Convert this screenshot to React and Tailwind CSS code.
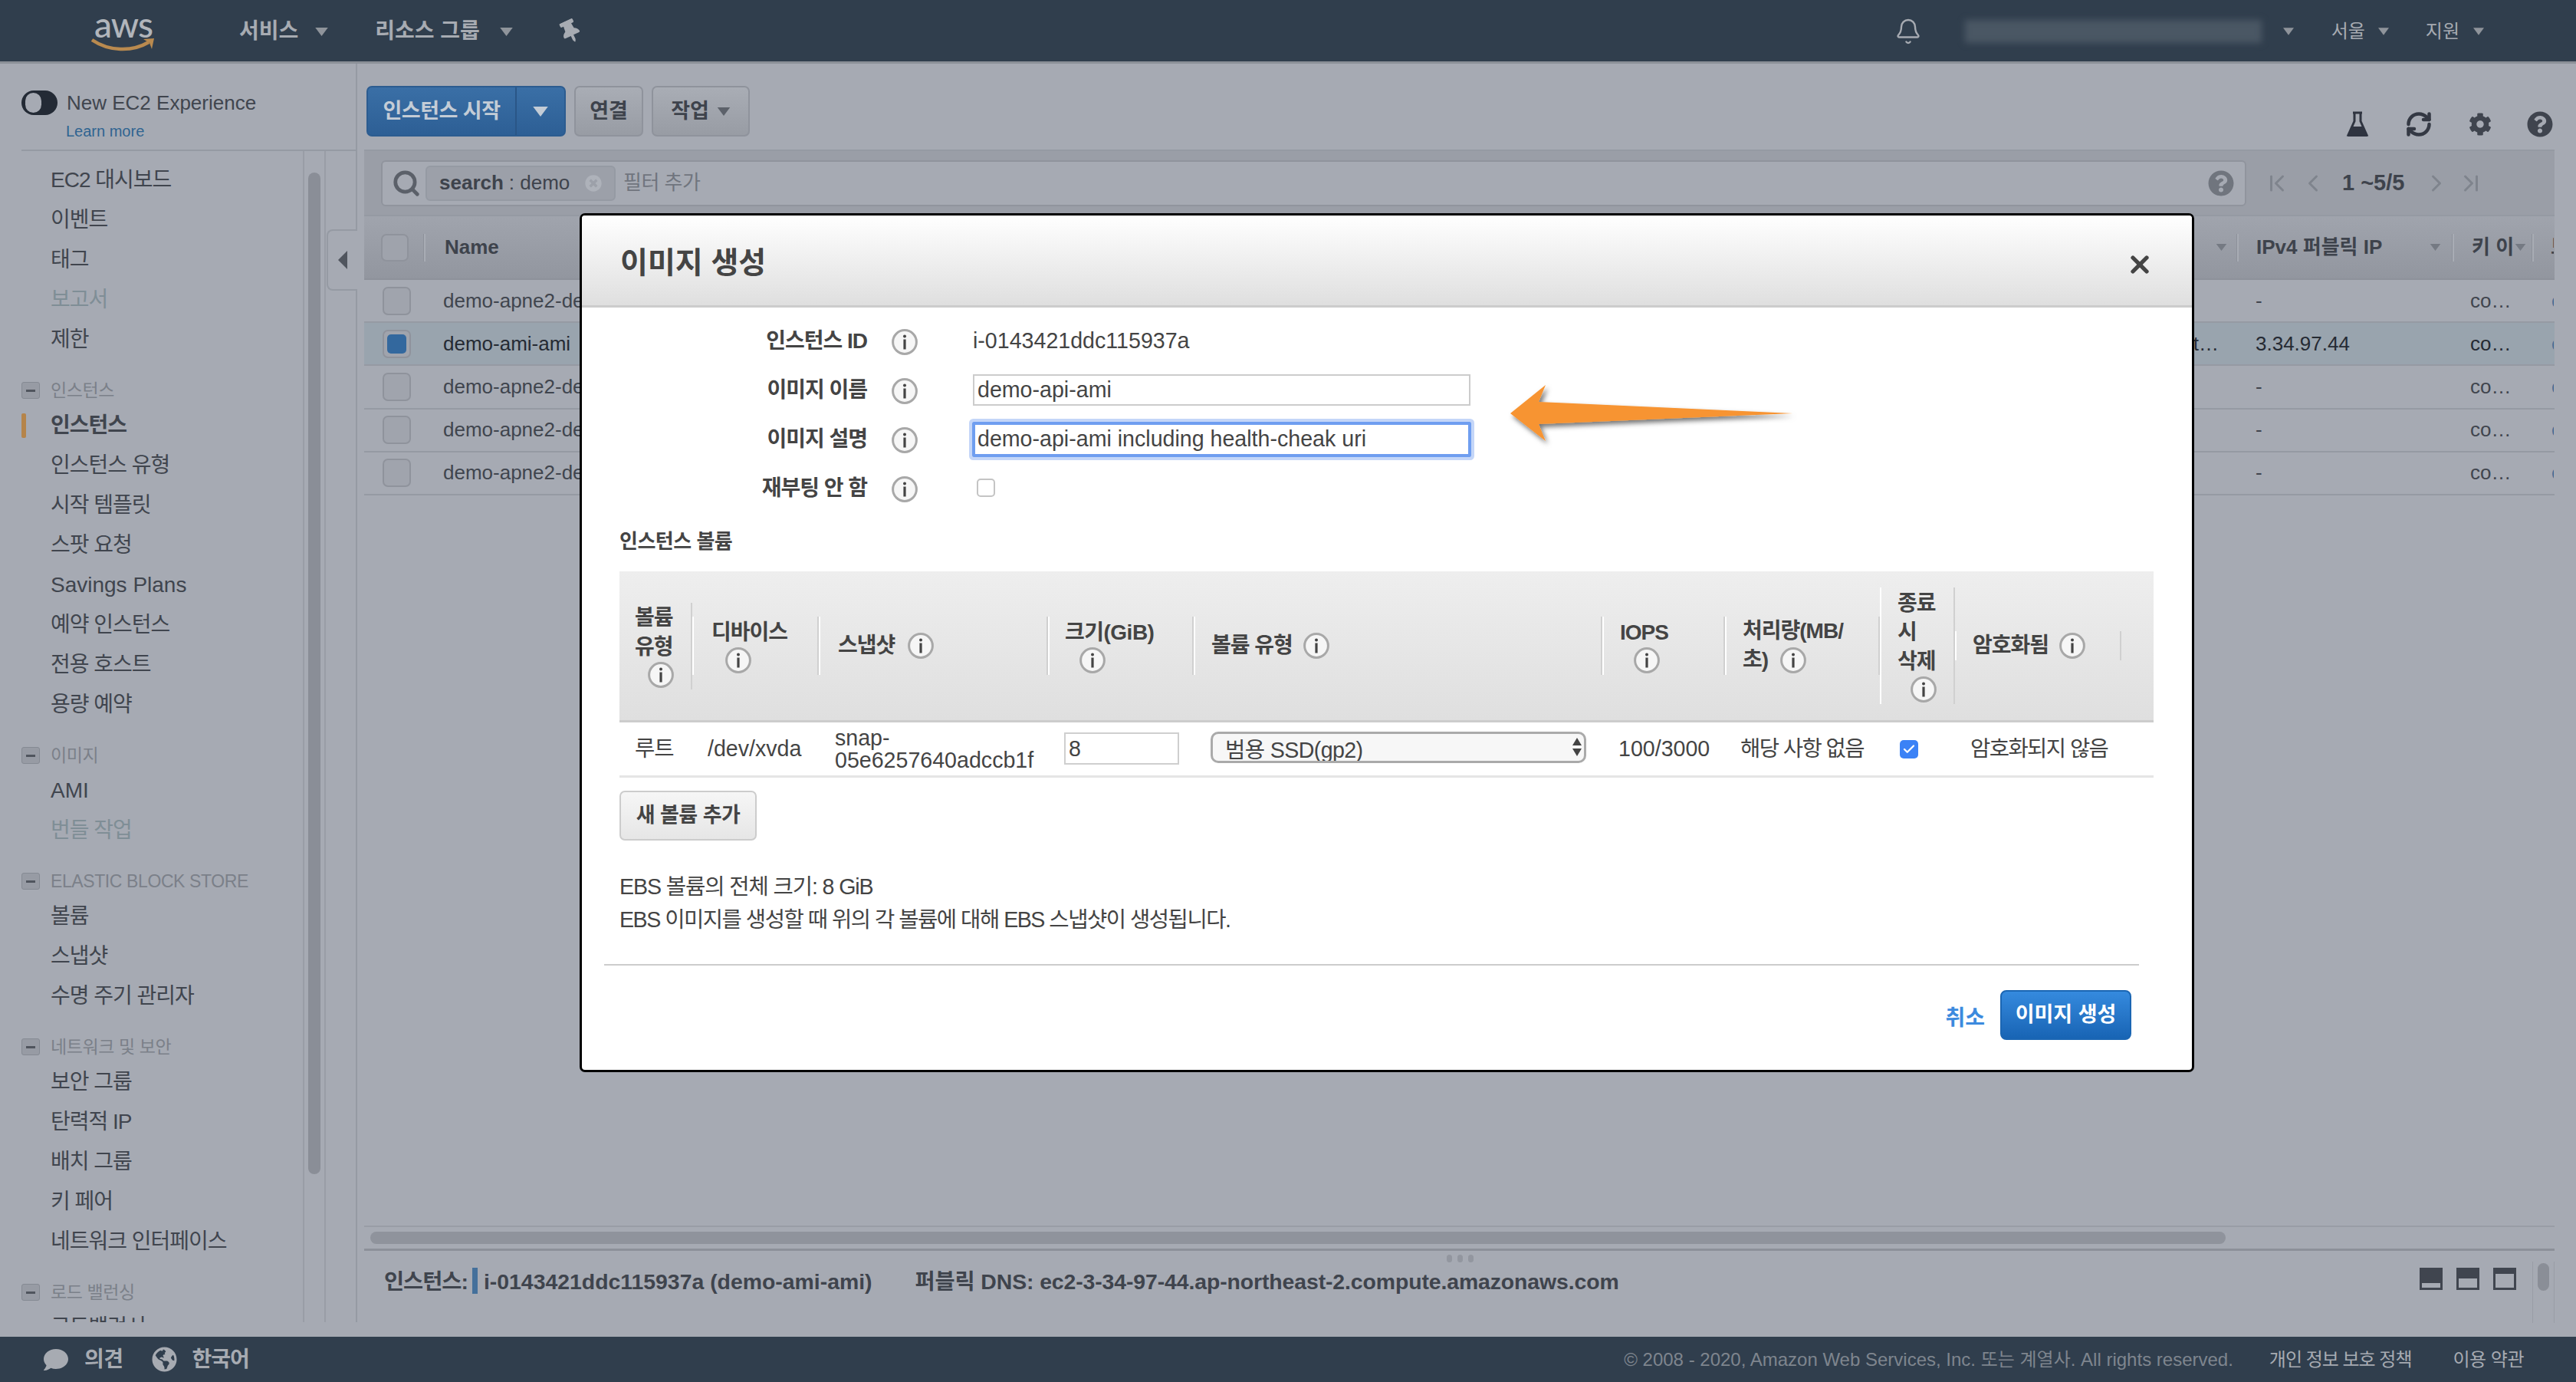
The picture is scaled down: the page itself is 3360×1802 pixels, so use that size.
import { Bell, Check, ChevronFirst, ChevronLast, ChevronLeft, ChevronRight, RefreshCw, Search, X } from 'lucide-react'
import { FaCog, FaComment, FaGlobeAmericas, FaQuestionCircle, FaThumbtack, FaTimesCircle } from 'react-icons/fa'

const navSections = [
  {
    items: [
      { label: 'EC2 대시보드' },
      { label: '이벤트' },
      { label: '태그' },
      { label: '보고서', muted: true },
      { label: '제한' },
    ],
  },
  {
    title: '인스턴스',
    items: [
      { label: '인스턴스', active: true },
      { label: '인스턴스 유형' },
      { label: '시작 템플릿' },
      { label: '스팟 요청' },
      { label: 'Savings Plans', latin: true },
      { label: '예약 인스턴스' },
      { label: '전용 호스트' },
      { label: '용량 예약' },
    ],
  },
  { title: '이미지', items: [{ label: 'AMI', latin: true }, { label: '번들 작업', muted: true }] },
  {
    title: 'ELASTIC BLOCK STORE',
    items: [{ label: '볼륨' }, { label: '스냅샷' }, { label: '수명 주기 관리자' }],
  },
  {
    title: '네트워크 및 보안',
    items: [
      { label: '보안 그룹' },
      { label: '탄력적 IP' },
      { label: '배치 그룹' },
      { label: '키 페어' },
      { label: '네트워크 인터페이스' },
    ],
  },
  { title: '로드 밸런싱', items: [{ label: '로드밸런서' }] },
]

const instances = [
  { name: 'demo-apne2-dev-api', ip: '-' },
  { name: 'demo-ami-ami', ip: '3.34.97.44', selected: true },
  { name: 'demo-apne2-dev-web', ip: '-' },
  { name: 'demo-apne2-dev-bastion', ip: '-' },
  { name: 'demo-apne2-dev-db', ip: '-' },
]

const Caret = ({ className }) => (
  <svg viewBox="0 0 12 8" className={className} fill="currentColor">
    <path d="M0 0h12L6 8z" />
  </svg>
)

const Info = () => (
  <svg viewBox="0 0 34 34" className="w-[34px] h-[34px] shrink-0 inline-block">
    <circle cx="17" cy="17" r="15.4" fill="#f6f6f6" stroke="#a8a8a8" strokeWidth="3" />
    <circle cx="17" cy="9.5" r="2" fill="#444444" />
    <rect x="15.4" y="13.5" width="3.2" height="13" fill="#444444" />
  </svg>
)

const Flask = () => (
  <svg viewBox="0 0 30 34" className="w-[30px] h-[34px]">
    <path d="M9 2h12M11 2v11L3 31h24l-8-18V2" fill="none" stroke="#2f3440" strokeWidth="3" />
    <path d="M7 20h16l5 13H2z" fill="#2f3440" />
  </svg>
)

const AwsLogo = () => (
  <div className="flex flex-col items-center w-[84px]">
    <span className="font-['Lato',sans-serif] text-[46px] leading-[34px] font-medium text-[#b1b5bb] tracking-[-1px]">aws</span>
    <svg viewBox="0 0 84 18" className="w-[84px] h-[18px]">
      <path d="M1 3c22 15 52 16 74 3" fill="none" stroke="#b98a4f" strokeWidth="4.5" />
      <path d="M68 2l14-1-3 14-3-8z" fill="#b98a4f" />
    </svg>
  </div>
)

const TopBar = () => (
  <header className="h-[83px] shrink-0 bg-[#303e4d] border-b-[3px] border-[#8b9098] flex items-center text-[#a7abb2] pt-[2px]">
    <div className="ml-[119px] w-[193px]">
      <AwsLogo />
    </div>
    <span className="text-[28px] font-bold">서비스</span>
    <Caret className="w-[17px] h-[11px] ml-[22px] text-[#8f949b]" />
    <span className="text-[28px] font-bold ml-[61px]">리소스 그룹</span>
    <Caret className="w-[17px] h-[11px] ml-[26px] text-[#8f949b]" />
    <FaThumbtack className="w-[26px] h-[30px] ml-[62px] -rotate-[25deg] text-[#a7abb2]" />
    <Bell className="w-[36px] h-[36px] ml-auto text-[#a7abb2]" strokeWidth={1.6} />
    <div className="w-[387px] h-[30px] ml-[56px] bg-[#4a5764] blur-[4px]" />
    <Caret className="w-[14px] h-[10px] ml-[28px] text-[#8f949b]" />
    <span className="text-[24px] ml-[49px]">서울</span>
    <Caret className="w-[14px] h-[10px] ml-[17px] text-[#8f949b]" />
    <span className="text-[24px] ml-[48px]">지원</span>
    <Caret className="w-[14px] h-[10px] ml-[18px] mr-[120px] text-[#8f949b]" />
  </header>
)

const Sidebar = () => (
  <aside className="w-[466px] shrink-0 h-[1641px] border-r-2 border-[#959aa3] flex flex-col relative">
    <div className="h-[114px] shrink-0 ml-[28px] border-b-2 border-[#959aa3] pt-[33px]">
      <div className="flex items-center gap-[12px] h-[36px]">
        <div className="w-[47px] h-[32px] rounded-full bg-[#232a35] flex items-center pl-[5px]">
          <div className="w-[21px] h-[26px] rounded-full bg-[#a6aab3]" />
        </div>
        <span className="text-[26px] text-[#40454e]">New EC2 Experience</span>
      </div>
      <a className="block ml-[58px] mt-[4px] text-[20px] text-[#2f6491]">Learn more</a>
    </div>
    <div className="flex-1 flex min-h-0">
      <nav className="w-[367px] ml-[28px] overflow-hidden pt-[12px]">
        {navSections.map((section, i) => (
          <div key={i} className="mb-[20px]">
            {section.title && (
              <div className="h-[40px] flex items-center gap-[14px] text-[23px] text-[#7b8089] tracking-[-0.4px]">
                <span className="w-[24px] h-[22px] rounded-[3px] bg-[#979ba4] border border-[#858a93] flex items-center justify-center">
                  <span className="w-[12px] h-[3px] bg-[#50555e]" />
                </span>
                {section.title}
              </div>
            )}
            {section.items.map((item) => (
              <div
                key={item.label}
                className={`h-[52px] flex items-center text-[28px] ${
                  item.muted ? 'text-[#7f8e96]' : 'text-[#40454e]'
                } ${item.active ? 'font-bold' : ''} ${item.latin ? '' : 'tracking-[-1px]'}`}
              >
                <span className={`w-[6px] h-[32px] rounded-[2px] mr-[32px] ${item.active ? 'bg-[#b5844a]' : ''}`} />
                {item.label}
              </div>
            ))}
          </div>
        ))}
      </nav>
      <div className="w-[30px] border-x-2 border-[#999da6] pt-[28px] px-[5px]">
        <div className="h-[1306px] rounded-full bg-[#8a8e97]" />
      </div>
    </div>
    <button className="absolute right-[-2px] top-[216px] w-[40px] h-[80px] bg-[#a6aab3] border-y-2 border-l-2 border-[#959aa3] rounded-l-[8px] flex items-center justify-center">
      <svg viewBox="0 0 12 24" className="w-[12px] h-[24px]">
        <path d="M12 0v24L0 12z" fill="#50555e" />
      </svg>
    </button>
  </aside>
)

const Toolbar = () => (
  <div className="h-[114px] shrink-0 border-b-2 border-[#959aa3] flex items-start pt-[29px] pl-[3px] text-[#3e434c]">
    <div className="h-[66px] w-[260px] flex rounded-[7px] border-2 border-[#2c5c90] bg-gradient-to-b from-[#3a6fa6] to-[#2d5f95] text-[#c3ccd6] font-bold text-[27px] tracking-[-0.5px]">
      <span className="w-[194px] flex items-center justify-center border-r-2 border-[#2a5687]">인스턴스 시작</span>
      <span className="flex-1 flex items-center justify-center">
        <Caret className="w-[22px] h-[13px] text-[#c3ccd6]" />
      </span>
    </div>
    <button className="h-[66px] w-[90px] ml-[11px] rounded-[7px] border-2 border-[#8f939c] bg-gradient-to-b from-[#a9adb5] to-[#989ca4] font-bold text-[27px]">연결</button>
    <button className="h-[66px] w-[128px] ml-[11px] rounded-[7px] border-2 border-[#8f939c] bg-gradient-to-b from-[#a9adb5] to-[#989ca4] font-bold text-[27px] flex items-center justify-center gap-[10px]">
      작업
      <Caret className="w-[18px] h-[11px] text-[#5c616a]" />
    </button>
    <div className="ml-auto flex items-center gap-[46px] pt-[32px] pr-[2px]">
      <Flask />
      <RefreshCw className="w-[38px] h-[36px] text-[#343944]" strokeWidth={3} />
      <FaCog className="w-[30px] h-[32px] text-[#3f444e]" />
      <FaQuestionCircle className="w-[34px] h-[34px] text-[#3f444e]" />
    </div>
  </div>
)

const FilterBar = () => (
  <div className="h-[85px] shrink-0 flex items-center bg-[#9a9ea7] border-b-2 border-[#959aa3]">
    <div className="ml-[22px] w-[2433px] h-[60px] rounded-[6px] border-2 border-[#90949d] bg-[#a6aab3] flex items-center pl-[12px] pr-[14px]">
      <Search className="w-[38px] h-[38px] text-[#5b6069]" strokeWidth={3} />
      <div className="ml-[6px] w-[248px] h-[46px] rounded-[6px] border-2 border-[#959aa3] bg-[#9ca0a9] flex items-center pl-[16px] text-[26px] text-[#3e434c]">
        <b>search</b>
        <span className="ml-[7px]">: demo</span>
        <FaTimesCircle className="w-[22px] h-[22px] ml-auto mr-[16px] text-[#aeb2ba]" />
      </div>
      <span className="ml-[10px] text-[26px] text-[#70757e] tracking-[-0.5px]">필터 추가</span>
      <FaQuestionCircle className="w-[34px] h-[34px] ml-auto text-[#70757e]" />
    </div>
    <div className="flex-1 flex items-center text-[#7f848d] pl-[22px]">
      <ChevronFirst className="w-[36px] h-[38px]" strokeWidth={2} />
      <ChevronLeft className="w-[36px] h-[38px] ml-[11px]" strokeWidth={2} />
      <span className="ml-[20px] text-[29px] font-bold text-[#3e434c] whitespace-nowrap">1 ~5/5</span>
      <ChevronRight className="w-[36px] h-[38px] ml-[24px]" strokeWidth={2} />
      <ChevronLast className="w-[36px] h-[38px] ml-[9px]" strokeWidth={2} />
    </div>
  </div>
)

const HeadSep = () => <span className="w-[3px] h-[36px] bg-[#a8acb4] border-l border-[#8d919a] shrink-0" />

const InstanceTable = () => (
  <div className="text-[26px]">
    <div className="h-[83px] grid grid-cols-[80px_2365px_281px_104px_26px] overflow-hidden bg-gradient-to-b from-[#a0a4ad] to-[#92969f] border-b-2 border-[#8d919a] text-[#3e434c] font-bold">
      <div className="flex items-center pl-[22px] justify-between">
        <span className="w-[36px] h-[36px] rounded-[7px] border-2 border-[#8f939c] bg-[#9fa3ac]" />
        <HeadSep />
      </div>
      <div className="flex items-center pl-[25px] justify-between">
        Name
        <span className="flex items-center gap-[12px]">
          <Caret className="w-[15px] h-[9px] text-[#757a83]" />
          <HeadSep />
        </span>
      </div>
      <div className="flex items-center pl-[23px] justify-between whitespace-nowrap">
        IPv4 퍼블릭 IP
        <span className="flex items-center gap-[14px]">
          <Caret className="w-[15px] h-[9px] text-[#757a83]" />
          <HeadSep />
        </span>
      </div>
      <div className="flex items-center pl-[23px] justify-between whitespace-nowrap">
        키 이
        <span className="flex items-center gap-[7px]">
          <Caret className="w-[15px] h-[9px] text-[#757a83]" />
          <HeadSep />
        </span>
      </div>
      <div className="flex items-center pl-[22px] overflow-hidden whitespace-nowrap">보안</div>
    </div>
    {instances.map((row) => (
      <div
        key={row.name}
        className={`h-[56.2px] grid grid-cols-[80px_2365px_281px_104px_26px] overflow-hidden border-b-2 border-[#959aa3] ${
          row.selected ? 'bg-[#99a4ae] text-[#252a33]' : 'text-[#40454e]'
        }`}
      >
        <div className="flex items-center pl-[24px]">
          <span className="w-[37px] h-[37px] rounded-[7px] border-2 border-[#8f939c] bg-[#a0a4ad] flex items-center justify-center">
            {row.selected && <span className="w-[25px] h-[25px] rounded-[5px] bg-[#33689e]" />}
          </span>
        </div>
        <div className="flex items-center pl-[23px] justify-between pr-[26px]">
          <span>{row.name}</span>
          <span>{row.selected ? 't…' : ''}</span>
        </div>
        <div className="flex items-center pl-[22px]">{row.ip}</div>
        <div className="flex items-center pl-[21px]">co…</div>
        <div className="flex items-center pl-[23px] overflow-hidden text-[#3f6c96]">c</div>
      </div>
    ))}
  </div>
)

const StatusBar = () => (
  <div className="h-[96px] shrink-0 border-t-[3px] border-[#8c9099] relative flex items-start pt-[22px] pl-[26px] text-[#3f444d] font-bold text-[28.4px]">
    <span className="leading-[36px] tracking-[-1px]">인스턴스:</span>
    <span className="w-[7px] h-[34px] bg-[#44709b] ml-[6px] mr-[8px]" />
    <span className="leading-[36px]">i-0143421ddc115937a (demo-ami-ami)</span>
    <span className="leading-[36px] ml-[56px] tracking-[-0.1px]">퍼블릭 DNS: ec2-3-34-97-44.ap-northeast-2.compute.amazonaws.com</span>
    <div className="ml-auto flex items-center gap-[18px]">
      <span className="w-[30px] h-[29px] bg-[#40454f] flex items-end justify-center pb-[3px]">
        <span className="w-[24px] h-[6px] bg-[#a6aab3]" />
      </span>
      <span className="w-[30px] h-[29px] bg-[#40454f] flex items-end justify-center pb-[3px]">
        <span className="w-[24px] h-[12px] bg-[#a6aab3]" />
      </span>
      <span className="w-[30px] h-[29px] bg-[#40454f] flex items-end justify-center pb-[3px]">
        <span className="w-[24px] h-[18px] bg-[#a6aab3]" />
      </span>
    </div>
    <div className="w-[29px] h-[80px] ml-[21px] -mt-[8px] border-x border-[#999da6] px-[6px] pt-[2px]">
      <div className="h-[36px] rounded-full bg-[#8a8e97]" />
    </div>
    <div className="absolute left-[1412px] top-[5px] flex gap-[7px]">
      <span className="w-[7px] h-[10px] rounded-full bg-[#92969f]" />
      <span className="w-[7px] h-[10px] rounded-full bg-[#92969f]" />
      <span className="w-[7px] h-[10px] rounded-full bg-[#92969f]" />
    </div>
  </div>
)

const Footer = () => (
  <footer className="h-[59px] shrink-0 bg-[#303e4d] flex items-center text-[#a7abb2]">
    <FaComment className="w-[36px] h-[32px] ml-[55px]" />
    <span className="ml-[19px] text-[28px] font-bold tracking-[-0.5px]">의견</span>
    <FaGlobeAmericas className="w-[33px] h-[33px] ml-[37px]" />
    <span className="ml-[20px] text-[28px] font-bold tracking-[-1px]">한국어</span>
    <span className="ml-auto text-[24px] text-[#7e858e]">© 2008 - 2020, Amazon Web Services, Inc. 또는 계열사. All rights reserved.</span>
    <span className="ml-[47px] text-[24px] tracking-[-1px]">개인 정보 보호 정책</span>
    <span className="ml-[54px] mr-[68px] text-[24px] tracking-[-0.5px]">이용 약관</span>
  </footer>
)

const FormRow = ({ label, children }) => (
  <div className="h-[64px] grid grid-cols-[372px_138px_1fr] items-center">
    <span className="text-right font-bold text-[28px] text-[#444444] tracking-[-1px] -mt-[3px]">{label}</span>
    <span className="pl-[32px] flex">
      <Info />
    </span>
    <div>{children}</div>
  </div>
)

const Th = ({ className, inner, children }) => (
  <div className={`flex items-center tracking-[-1px] ${className || ''}`}>
    <div className={`w-full flex flex-col justify-center border-r-2 border-[#d0d0d0] ${inner}`}>{children}</div>
  </div>
)

const VolumeTable = () => (
  <div className="text-[28.6px] text-[#444444]">
    <div className="h-[197px] grid grid-cols-[95px_165px_299px_190px_533px_160px_202px_98px_217px_41px] bg-gradient-to-b from-[#eeeeee] to-[#dfdfdf] border-b-[3px] border-[#cccccc] font-bold text-[28px] leading-[38px]">
      <Th inner="h-[113px] pl-[20px] border-[#c8c8c8]">
        <span>볼륨</span>
        <span>유형</span>
        <span className="pl-[17px] flex"><Info /></span>
      </Th>
      <Th inner="h-[76px] pl-[23px] border-l-2 border-l-white">
        <span>디바이스</span>
        <span className="pl-[18px] flex"><Info /></span>
      </Th>
      <Th inner="h-[76px] pl-[23px] border-l-2 border-l-white">
        <span className="flex items-center gap-[17px]">스냅샷 <Info /></span>
      </Th>
      <Th inner="h-[76px] pl-[20px] border-l-2 border-l-white">
        <span className="tracking-[-0.5px]">크기(GiB)</span>
        <span className="pl-[19px] flex"><Info /></span>
      </Th>
      <Th inner="h-[76px] pl-[21px] border-l-2 border-l-white">
        <span className="flex items-center gap-[14px]">볼륨 유형 <Info /></span>
      </Th>
      <Th inner="h-[76px] pl-[21px] border-l-2 border-l-white">
        <span>IOPS</span>
        <span className="pl-[18px] flex"><Info /></span>
      </Th>
      <Th inner="h-[76px] pl-[21px] border-l-2 border-l-white">
        <span>처리량(MB/</span>
        <span className="flex items-center gap-[16px]">초) <Info /></span>
      </Th>
      <Th inner="h-[152px] pl-[21px] border-l-2 border-l-white">
        <span>종료</span>
        <span>시</span>
        <span>삭제</span>
        <span className="pl-[17px] flex"><Info /></span>
      </Th>
      <Th inner="h-[38px] pl-[21px] border-l-2 border-l-white">
        <span className="flex items-center gap-[14px]">암호화됨 <Info /></span>
      </Th>
      <div />
    </div>
    <div className="h-[72px] grid grid-cols-[95px_165px_299px_190px_533px_160px_202px_98px_217px_41px] items-center border-b-[3px] border-[#e5e5e5]">
      <span className="pl-[20px] tracking-[-1px]">루트</span>
      <span className="pl-[20px]">/dev/xvda</span>
      <span className="pl-[21px] leading-[29px]">snap-<br />05e6257640adccb1f</span>
      <span className="pl-[21px]">
        <input readOnly defaultValue="8" className="w-[150px] h-[42px] border-2 border-[#cfcfcf] pl-[4px] outline-none" />
      </span>
      <span className="pl-[22px] relative">
        <select className="w-[490px] h-[41px] appearance-none rounded-[10px] border-[3px] border-[#aaaaaa] bg-[#f7f7f7] pl-[16px] outline-none tracking-[-0.6px]">
          <option>범용 SSD(gp2)</option>
        </select>
        <svg viewBox="0 0 12 24" className="absolute right-[27px] top-[8px] w-[12px] h-[24px]" fill="#444444">
          <path d="M6 0l6 10H0zM0 14h12L6 24z" />
        </svg>
      </span>
      <span className="pl-[21px]">100/3000</span>
      <span className="pl-[20px] tracking-[-1.6px] whitespace-nowrap">해당 사항 없음</span>
      <span className="pl-[26px]">
        <span className="w-[24px] h-[24px] rounded-[5px] bg-[#3b82f6] flex items-center justify-center">
          <Check className="w-[18px] h-[18px] text-white" strokeWidth={3} />
        </span>
      </span>
      <span className="pl-[20px] whitespace-nowrap tracking-[-1.6px]">암호화되지 않음</span>
    </div>
  </div>
)

const CreateImageModal = () => (
  <div className="absolute left-[756px] top-[278px] w-[2106px] h-[1120px] border-[3px] border-black rounded-[7px] bg-white overflow-hidden flex flex-col">
    <div className="h-[120px] shrink-0 bg-gradient-to-b from-white to-[#dfdfdf] border-b-[3px] border-[#cccccc] flex items-center justify-between pl-[50px] pr-[50px]">
      <h2 className="text-[39px] font-bold text-[#444444] mt-[8px]">이미지 생성</h2>
      <X className="w-[36px] h-[36px] text-[#444444] mt-[11px]" strokeWidth={3.5} />
    </div>
    <div className="pt-[13px] text-[28.6px] text-[#444444]">
      <FormRow label="인스턴스 ID"><span className="block -mt-[4px]">i-0143421ddc115937a</span></FormRow>
      <FormRow label="이미지 이름">
        <input readOnly defaultValue="demo-api-ami" className="block -mt-[3px] w-[649px] h-[41px] border-2 border-[#cccccc] pl-[4px] outline-none" />
      </FormRow>
      <FormRow label="이미지 설명">
        <input
          readOnly
          defaultValue="demo-api-ami including health-cheak uri"
          className="block -mt-[3px] -ml-[1px] w-[651px] h-[46px] border-[4px] border-[#6f9ef0] rounded-[2px] pl-[3px] outline-none shadow-[0_0_0_4px_#c4d6f8]"
        />
      </FormRow>
      <FormRow label="재부팅 안 함">
        <span className="block w-[24px] h-[24px] ml-[5px] mb-[4px] rounded-[5px] border-2 border-[#c4c4c4] bg-white" />
      </FormRow>
    </div>
    <div className="pl-[49px] pr-[50px] text-[28.6px] text-[#444444]">
      <div className="h-[70px] pt-[3px] flex items-center font-bold text-[26px] tracking-[-0.5px]">인스턴스 볼륨</div>
      <div className="mt-[5px]">
        <VolumeTable />
      </div>
      <button className="mt-[17px] block w-[179px] h-[65px] rounded-[7px] border-2 border-[#cccccc] bg-gradient-to-b from-[#f6f6f6] to-[#e6e6e6] font-bold text-[27px] tracking-[-0.5px]">
        새 볼륨 추가
      </button>
      <div className="mt-[39px] leading-[43px]">
        <p className="tracking-[-1.1px]">EBS 볼륨의 전체 크기: 8 GiB</p>
        <p className="tracking-[-1.5px]">EBS 이미지를 생성할 때 위의 각 볼륨에 대해 EBS 스냅샷이 생성됩니다.</p>
      </div>
    </div>
    <div className="mt-[36px] ml-[29px] w-[2002px] border-t-[2px] border-[#cccccc]" />
    <div className="w-[2021px] flex justify-end items-center mt-[32px] gap-[20px]">
      <span className="text-[28px] font-bold text-[#3c8ade] mt-[8px]">취소</span>
      <button className="w-[171px] h-[65px] rounded-[8px] border-2 border-[#1b66b3] bg-gradient-to-b from-[#358ade] to-[#1864b4] text-white font-bold text-[27px]">
        이미지 생성
      </button>
    </div>
    {/* annotation arrow from the screenshot */}
    <svg viewBox="0 0 380 90" className="absolute left-[1206px] top-[215px] w-[380px] h-[90px] overflow-visible">
      <defs>
        <filter id="arrowShadow" x="-10%" y="-30%" width="120%" height="170%">
          <feDropShadow dx="3" dy="4" stdDeviation="3" floodColor="#000000" floodOpacity="0.55" />
        </filter>
      </defs>
      <path
        d="M5 43L51 6L42 28L373 43L42 57L51 79z"
        fill="#f79433"
        filter="url(#arrowShadow)"
      />
    </svg>
  </div>
)

const App = () => {
  return (
    <div className="relative w-[3360px] h-[1802px] overflow-hidden bg-[#a6aab3] flex flex-col font-['Liberation_Sans','Noto_Sans_CJK_KR',sans-serif]">
      <TopBar />
      <div className="flex-1 flex min-h-0">
        <Sidebar />
        <main className="w-[2866px] h-[1641px] pl-[9px] flex flex-col">
          <Toolbar />
          <FilterBar />
          <InstanceTable />
          <div className="flex-1" />
          <div className="h-[30px] shrink-0 border-t-2 border-[#999da6] pt-[6px] pl-[8px]">
            <div className="w-[2420px] h-[16px] rounded-full bg-[#8f939c]" />
          </div>
          <StatusBar />
        </main>
      </div>
      <Footer />
      <CreateImageModal />
    </div>
  )
}

export default App
